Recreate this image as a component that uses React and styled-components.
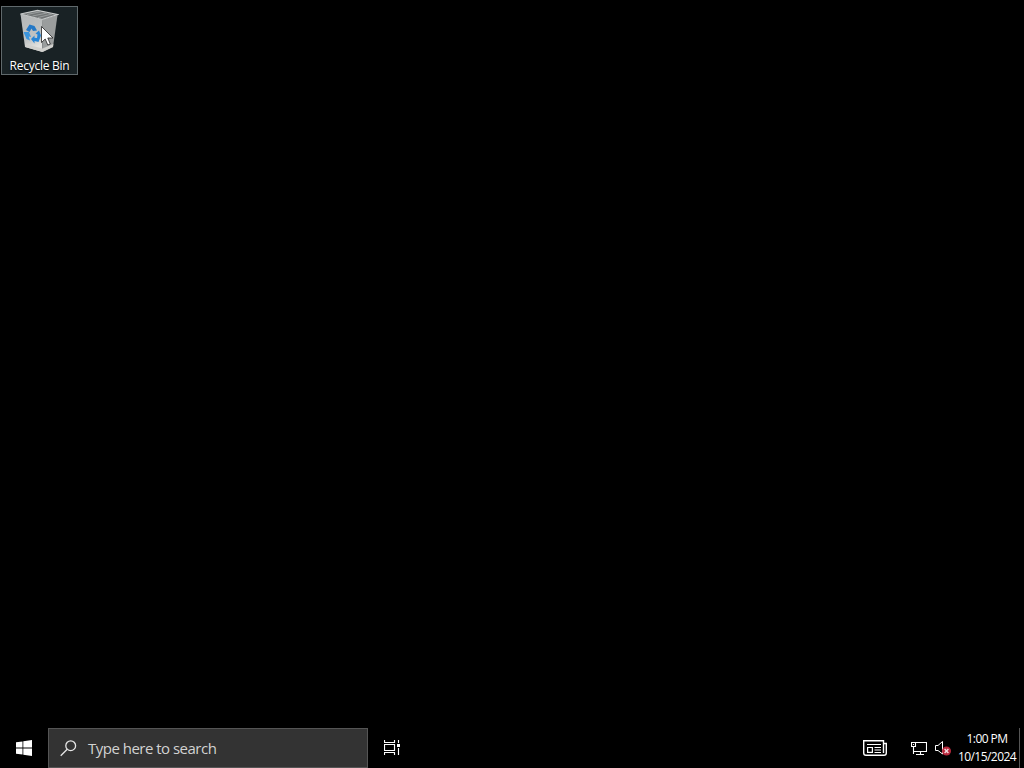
import React from 'react'
import styled, { createGlobalStyle } from 'styled-components';

const GlobalStyle = createGlobalStyle`
  body {
    margin: 0;
    background: #000;
    overflow: hidden;
  }
`;

const RecycleBinIcon = () => (
  <svg width="39" height="44" viewBox="1 0 39 44">
    <defs>
      <linearGradient id="binSide" x1="0" y1="0" x2="0.3" y2="1">
        <stop offset="0" stopColor="#b3b6b7" />
        <stop offset="0.7" stopColor="#c0c3c3" />
        <stop offset="1" stopColor="#e2e2e0" />
      </linearGradient>
    </defs>
    <path d="M1.500 5 L23 10.500 L23.500 43 L6 38 Z" fill="url(#binSide)" />
    <path d="M23 10.500 L38.500 6 L34 38 L23.500 43 Z" fill="#9a9d9d" />
    <path d="M6 35 L23.500 39.500 L34.300 35 L34 38 L23.500 43 L6.300 38 Z" fill="#d0d0cd" />
    <path d="M1.500 5 L18.500 1.300 L38.500 5.500 L23 10.500 Z" fill="#707475" stroke="#c8cbcb" strokeWidth="1.200" />
    <path d="M8 5.500 L22 2.700 M13.500 7 L28 4 M19 8.500 L33 5" stroke="#9a9e9e" strokeWidth="1" />
    <path d="M7 21 L10.500 15.500 L15.500 17 L18 21.500 L14 22 L12.500 19.500 L10.500 23 Z" fill="#2478c6" />
    <path d="M4.500 23 L10 23 L12 28 L9.800 27.500 L11 31.500 L7.500 30 Z" fill="#3b94dc" />
    <path d="M12 30 L15.500 26.500 V28.700 L18 29 L18.500 25.500 L16.500 24.500 L20 21.500 L22 26.500 L19.500 33 L15.500 32 V34.500 Z" fill="#2785d6" />
  </svg>
)

const CursorIcon = () => (
  <svg width="13" height="20" viewBox="0 0 13 20">
    <path d="M0.500 0.500 V16.500 L4.200 13 L6.800 19 L9.300 18 L6.800 12 H12 Z" fill="#fff" stroke="#222" strokeWidth="0.800" />
  </svg>
)

const StartIcon = () => (
  <svg width="16" height="16" viewBox="0 0 16 16" fill="#fff">
    <path d="M0 2.300 L6.500 1.400 V7.500 H0 Z M7.300 1.300 L16 0 V7.500 H7.300 Z M0 8.400 H6.500 V14.600 L0 13.700 Z M7.300 8.400 H16 V16 L7.300 14.700 Z" />
  </svg>
)

const SearchIcon = () => (
  <svg width="17" height="17" viewBox="0 0 17 17" fill="none" stroke="#e6e6e6" strokeWidth="1.300">
    <circle cx="10.700" cy="5.700" r="4.900" />
    <path d="M7.200 9.200 L0.700 15.700" />
  </svg>
)

const TaskViewIcon = () => (
  <svg width="16" height="16" viewBox="0 0 16 16" fill="none" stroke="#fff">
    <path d="M0.500 0 V2.500 H10.500 V0 M0.500 4.500 H10.500 V10.500 H0.500 Z M0.500 15 V12.500 H10.500 V15 M14.500 0 V3 M14.500 8 V15" strokeWidth="1.150" />
    <path d="M13 4 H16 V7 H13 Z" fill="#fff" stroke="none" />
  </svg>
)

const NewsIcon = () => (
  <svg width="24" height="16" viewBox="0 0 24 16" fill="none" stroke="#fff">
    <path d="M21 3.500 H23.300 V13 Q23.300 15.300 21 15.300 H3 Q0.700 15.300 0.700 13 V0.700 H20.500 V13" strokeWidth="1.400" />
    <path d="M4 4.500 H18 M4.600 7.500 H9.400 V12.400 H4.600 Z M11.500 7.500 H18 M11.500 10 H18 M11.500 12.500 H18" strokeWidth="1.200" />
  </svg>
)

const NetworkIcon = () => (
  <svg width="16" height="15" viewBox="0 0 16 15" fill="none" stroke="#fff" strokeWidth="1.100">
    <path d="M5 1.500 H15.500 V10.500 H3 M2.500 5.500 V13 M9.500 11 V13 M5 13.500 H13" />
    <path d="M0.500 1.500 H4.500 V5.500 H0.500 Z M2.500 3 V4" />
  </svg>
)

const MutedIcon = () => (
  <svg width="17" height="16" viewBox="0 0 17 16">
    <path d="M0.500 5.500 H3 L7.500 1.500 V14 L3 10.500 H0.500 Z" fill="none" stroke="#fff" />
    <circle cx="11.500" cy="11" r="4.500" fill="#b8283c" />
    <path d="M9.600 9.100 L13.400 12.900 M13.400 9.100 L9.600 12.900" stroke="#f3dde0" strokeWidth="1.400" />
  </svg>
)

const App = () => {
  return (
    <Desktop>
      <GlobalStyle />
      <Workspace>
        <Shortcut>
          <RecycleBinIcon />
          <ShortcutLabel>Recycle Bin</ShortcutLabel>
        </Shortcut>
        <Cursor><CursorIcon /></Cursor>
      </Workspace>
      <Taskbar>
        <TaskButton aria-label="Start"><StartIcon /></TaskButton>
        <SearchBox>
          <SearchIcon />
          <SearchText>Type here to search</SearchText>
        </SearchBox>
        <TaskButton aria-label="Task View"><TaskViewIcon /></TaskButton>
        <Tray>
          <TrayItem $gap={24}><NewsIcon /></TrayItem>
          <TrayItem $gap={8}><NetworkIcon /></TrayItem>
          <TrayItem $gap={5}><MutedIcon /></TrayItem>
          <Clock>
            <ClockLine>1:00 PM</ClockLine>
            <ClockLine>10/15/2024</ClockLine>
          </Clock>
          <ShowDesktop />
        </Tray>
      </Taskbar>
    </Desktop>
  )
}

export default App;

const Desktop = styled.div`
  display: flex;
  flex-direction: column;
  width: 1024px;
  height: 768px;
  background: #000;
  font-family: 'Open Sans', 'Noto Sans', sans-serif;
  color: #fff;
  cursor: default;
`;

const Workspace = styled.main`
  position: relative;
  flex: 1;
  padding: 6px 0 0 1px;
`;

const Shortcut = styled.div`
  display: flex;
  flex-direction: column;
  align-items: center;
  box-sizing: border-box;
  width: 77px;
  height: 69px;
  padding-top: 2px;
  border: 1px solid #60696c;
  background: #192225;

  & svg {
    flex: none;
  }
`;

const ShortcutLabel = styled.span`
  margin-top: 5px;
  font-size: 12px;
  line-height: 16px;
  letter-spacing: -0.25px;
  white-space: nowrap;
  text-shadow: 0 1px 2px #000;
`;

const Cursor = styled.div`
  position: absolute;
  left: 41px;
  top: 26px;
  line-height: 0;
`;

const Taskbar = styled.footer`
  display: flex;
  height: 40px;
  background: #000;
`;

const TaskButton = styled.div`
  display: flex;
  align-items: center;
  justify-content: center;
  width: 48px;
`;

const SearchBox = styled.div`
  display: flex;
  align-items: center;
  box-sizing: border-box;
  width: 320px;
  padding-left: 11px;
  border: 1px solid #555;
  background: #333;
`;

const SearchText = styled.span`
  margin-left: 11px;
  font-size: 15px;
  line-height: 20px;
  letter-spacing: -0.51px;
  color: #d2d2d2;
  white-space: nowrap;
`;

const Tray = styled.div`
  display: flex;
  align-items: center;
  margin-left: auto;
`;

const TrayItem = styled.div`
  margin-right: ${(props) => props.$gap}px;
  line-height: 0;
`;

const Clock = styled.div`
  display: flex;
  flex-direction: column;
  align-items: center;
  width: 60px;
  margin-right: 2px;
`;

const ClockLine = styled.span`
  font-size: 12px;
  line-height: 18px;
  letter-spacing: -0.55px;
  white-space: nowrap;
`;

const ShowDesktop = styled.div`
  width: 4px;
  height: 40px;
  border-left: 1px solid #555;
`;
